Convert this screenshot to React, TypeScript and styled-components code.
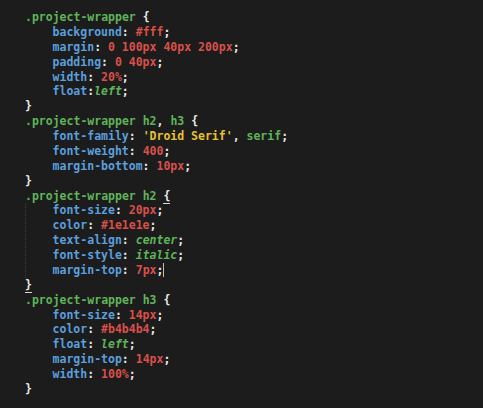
import React from "react";
import styled, { createGlobalStyle } from "styled-components";

const Global = createGlobalStyle`
  html, body { margin: 0; padding: 0; background: #1c1c1c; }
  body { width: 483px; height: 408px; overflow: hidden; }
`;

const LH = 14.88;

const Editor = styled.div`
  width: 483px;
  height: 408px;
  box-sizing: border-box;
  background: #1c1c1c;
  padding: 10px 0 0 25px;
  font-family: "DejaVu Sans Mono", "Liberation Mono", monospace;
  font-size: 11.5px;
  font-weight: bold;
  line-height: ${LH}px;
  color: #e6e6e6;
`;

const Rule = styled.div<{ $active?: boolean }>`
  position: relative;
  &::before {
    content: "";
    display: ${(p) => (p.$active ? "block" : "none")};
    position: absolute;
    left: 0;
    top: ${LH}px;
    bottom: ${LH}px;
    border-left: 1px dotted #3e3e3e;
  }
`;

const Line = styled.div<{ $indent?: boolean }>`
  white-space: pre;
  height: ${LH}px;
  padding-left: ${(p) => (p.$indent ? "27.6px" : "0")};
`;

type Kind = "sel" | "prop" | "num" | "str" | "kw" | "id" | "p";

const colors: Record<Kind, string> = {
  sel: "#5fb35a",
  prop: "#5b9fdc",
  num: "#d9504a",
  str: "#e6c035",
  kw: "#5fb35a",
  id: "#5fb35a",
  p: "#e8e8e8",
};

const Tok = styled.span<{ $k: Kind; $match?: boolean }>`
  color: ${(p) => colors[p.$k]};
  font-style: ${(p) => (p.$k === "kw" ? "italic" : "normal")};
  ${(p) => (p.$match ? "border-bottom: 1px solid #d8d8d8;" : "")}
`;

const Caret = styled.span`
  display: inline-block;
  width: 0;
  height: 14px;
  vertical-align: -3px;
  border-left: 1px solid #bdbdbd;
`;

type Seg = [Kind, string];
type Decl = { prop: string; value: Seg[]; tight?: boolean; caret?: boolean };
type RuleDef = { sel: Seg[]; decls: Decl[]; active?: boolean };

const rules: RuleDef[] = [
  {
    sel: [["sel", ".project-wrapper "]],
    decls: [
      { prop: "background", value: [["num", "#fff"]] },
      { prop: "margin", value: [["num", "0 100px 40px 200px"]] },
      { prop: "padding", value: [["num", "0 40px"]] },
      { prop: "width", value: [["num", "20%"]] },
      { prop: "float", value: [["kw", "left"]], tight: true },
    ],
  },
  {
    sel: [["sel", ".project-wrapper h2"], ["p", ", "], ["sel", "h3 "]],
    decls: [
      { prop: "font-family", value: [["str", "'Droid Serif'"], ["p", ", "], ["id", "serif"]] },
      { prop: "font-weight", value: [["num", "400"]] },
      { prop: "margin-bottom", value: [["num", "10px"]] },
    ],
  },
  {
    sel: [["sel", ".project-wrapper h2 "]],
    active: true,
    decls: [
      { prop: "font-size", value: [["num", "20px"]] },
      { prop: "color", value: [["num", "#1e1e1e"]] },
      { prop: "text-align", value: [["kw", "center"]] },
      { prop: "font-style", value: [["kw", "italic"]] },
      { prop: "margin-top", value: [["num", "7px"]], caret: true },
    ],
  },
  {
    sel: [["sel", ".project-wrapper h3 "]],
    decls: [
      { prop: "font-size", value: [["num", "14px"]] },
      { prop: "color", value: [["num", "#b4b4b4"]] },
      { prop: "float", value: [["kw", "left"]] },
      { prop: "margin-top", value: [["num", "14px"]] },
      { prop: "width", value: [["num", "100%"]] },
    ],
  },
];

export default function App() {
  return (
    <>
      <Global />
      <Editor>
        {rules.map((r, i) => (
          <Rule key={i} $active={r.active}>
            <Line>
              {r.sel.map(([k, t], j) => (
                <Tok key={j} $k={k}>
                  {t}
                </Tok>
              ))}
              <Tok $k="p" $match={r.active}>
                {"{"}
              </Tok>
            </Line>
            {r.decls.map((d, j) => (
              <Line key={j} $indent>
                <Tok $k="prop">{d.prop}</Tok>
                <Tok $k="p">{d.tight ? ":" : ": "}</Tok>
                {d.value.map(([k, t], m) => (
                  <Tok key={m} $k={k}>
                    {t}
                  </Tok>
                ))}
                <Tok $k="p">;</Tok>
                {d.caret && <Caret />}
              </Line>
            ))}
            <Line>
              <Tok $k="p" $match={r.active}>
                {"}"}
              </Tok>
            </Line>
          </Rule>
        ))}
      </Editor>
    </>
  );
}
